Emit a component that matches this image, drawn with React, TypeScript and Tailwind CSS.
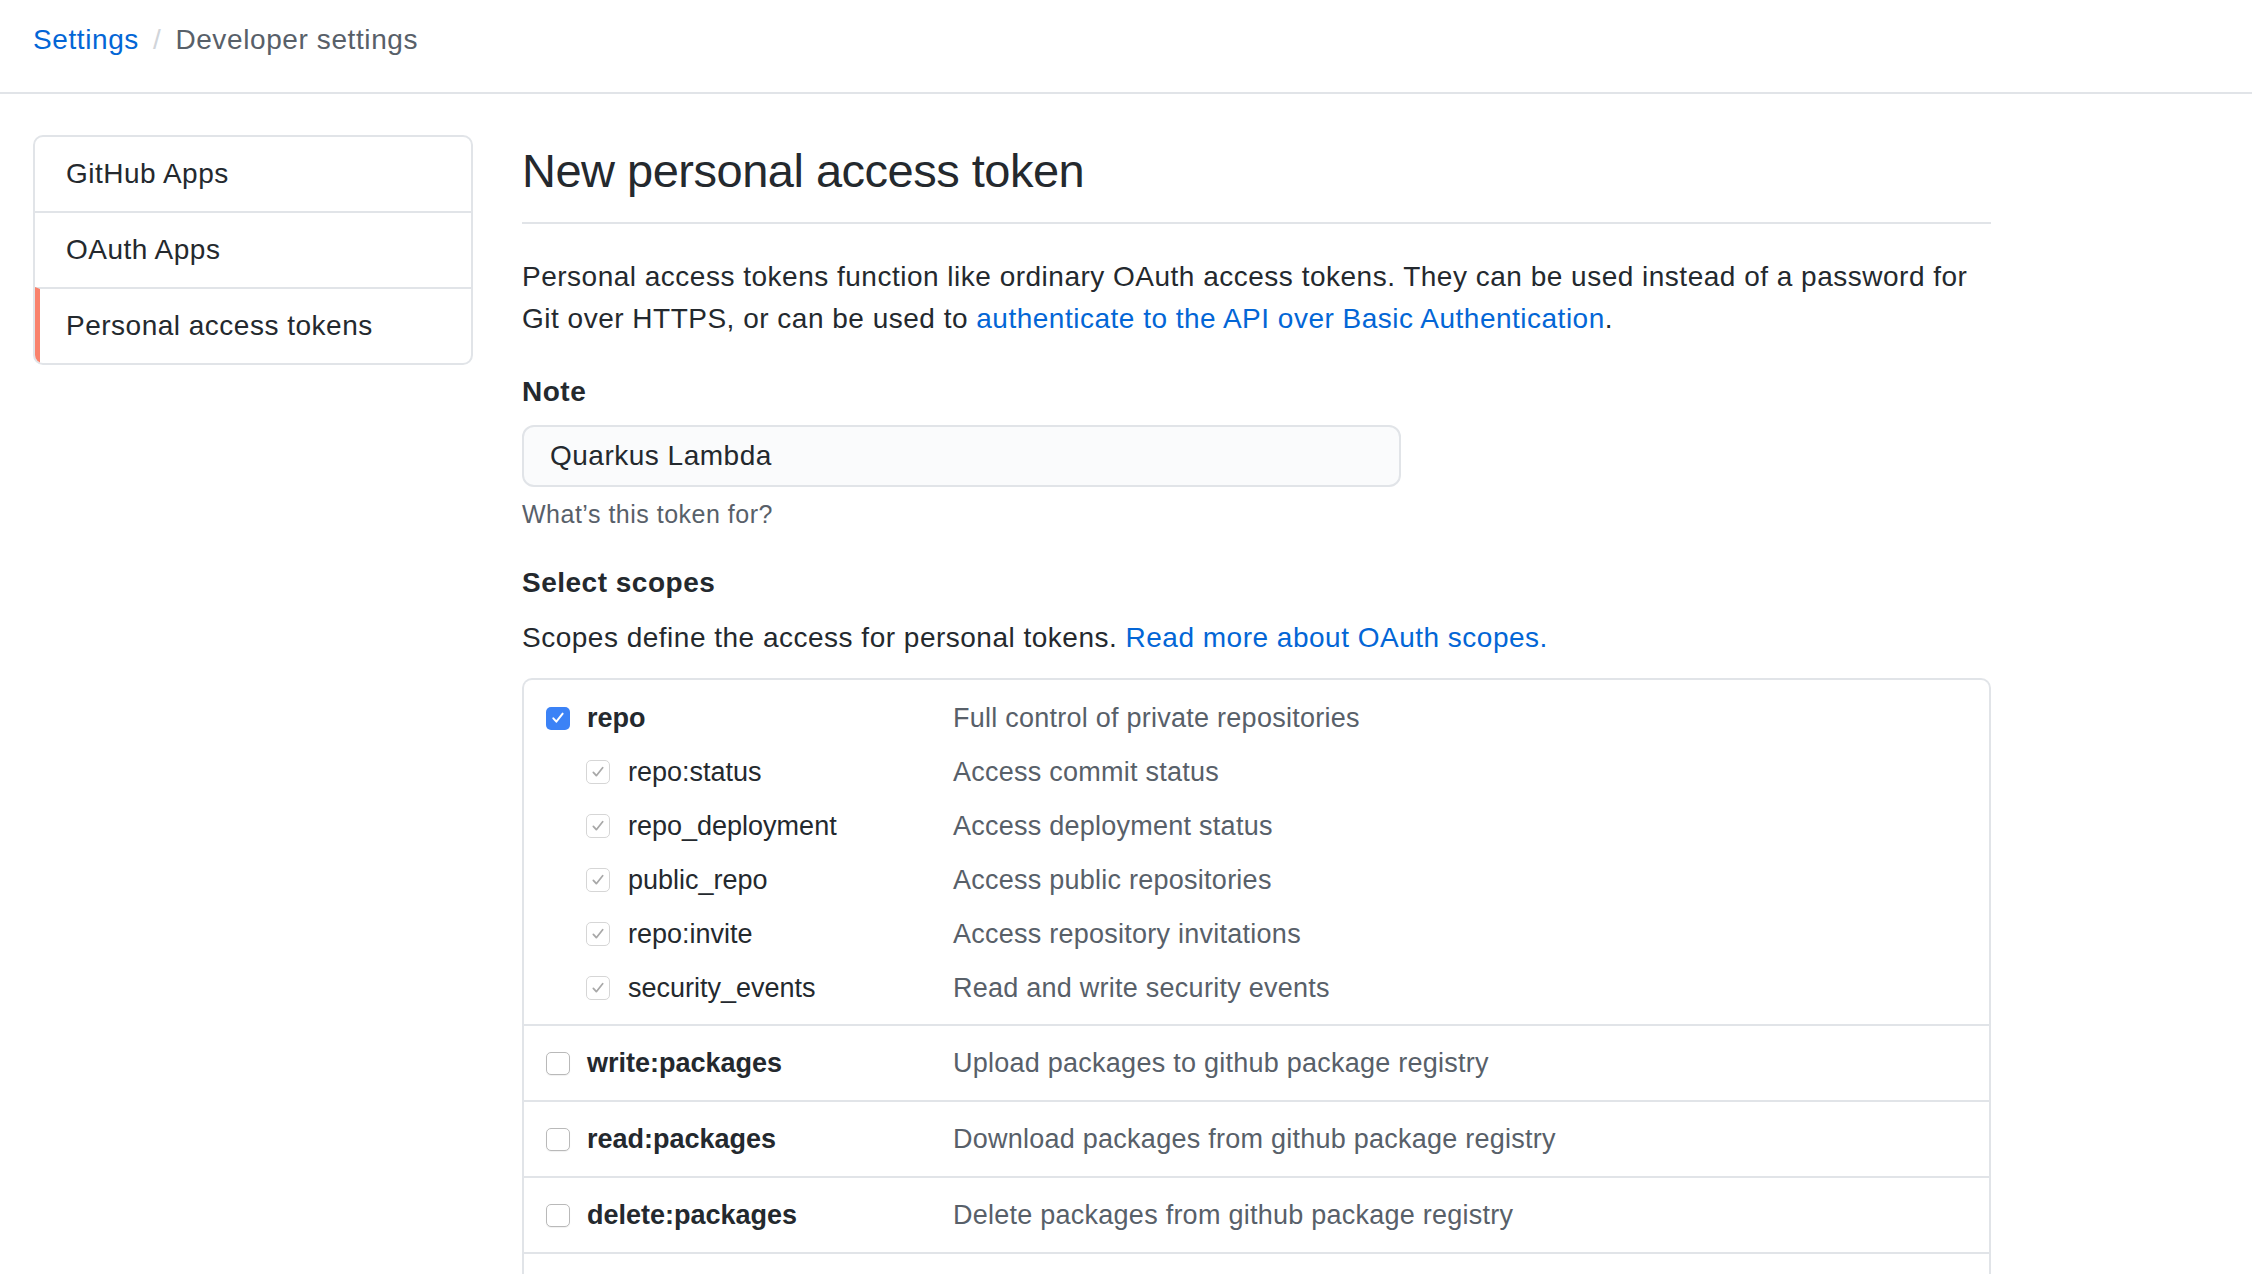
import React from 'react';

interface Scope {
  name: string;
  description: string;
}

interface ScopeGroup {
  scope: Scope;
  checked: boolean;
  children?: Scope[];
}

const scopeGroups: ScopeGroup[] = [
  {
    scope: { name: 'repo', description: 'Full control of private repositories' },
    checked: true,
    children: [
      { name: 'repo:status', description: 'Access commit status' },
      { name: 'repo_deployment', description: 'Access deployment status' },
      { name: 'public_repo', description: 'Access public repositories' },
      { name: 'repo:invite', description: 'Access repository invitations' },
      { name: 'security_events', description: 'Read and write security events' },
    ],
  },
  {
    scope: { name: 'write:packages', description: 'Upload packages to github package registry' },
    checked: false,
  },
  {
    scope: { name: 'read:packages', description: 'Download packages from github package registry' },
    checked: false,
  },
  {
    scope: { name: 'delete:packages', description: 'Delete packages from github package registry' },
    checked: false,
  },
  {
    scope: { name: 'admin:org', description: 'Full control of orgs and teams, read and write org projects' },
    checked: false,
  },
];

const navItems = ['GitHub Apps', 'OAuth Apps', 'Personal access tokens'];

function CheckMark({ color, weight }: { color: string; weight: number }) {
  return (
    <svg viewBox="0 0 24 24" className="w-[16px] h-[16px]" fill="none">
      <path d="M5 12.5l4.5 5L19 5.5" stroke={color} strokeWidth={weight} strokeLinecap="round" strokeLinejoin="round" />
    </svg>
  );
}

function Checkbox({ state }: { state: 'checked' | 'inherited' | 'empty' }) {
  if (state === 'checked') {
    return (
      <div className="w-[24px] h-[23px] rounded-[5px] bg-[#3b82f6] flex items-center justify-center shrink-0">
        <CheckMark color="#ffffff" weight={3} />
      </div>
    );
  }
  if (state === 'inherited') {
    return (
      <div className="w-[24px] h-[24px] rounded-[5px] bg-white border border-[#d6d6d6] flex items-center justify-center shrink-0">
        <CheckMark color="#a8a8a8" weight={2.6} />
      </div>
    );
  }
  return (
    <div className="w-[24px] h-[23px] rounded-[5px] bg-white border border-[#b9b9b9] shadow-[0_1px_1px_rgba(0,0,0,0.06)] shrink-0" />
  );
}

export default function App() {
  return (
    <div className="min-h-screen bg-white text-[#24292e] font-['Liberation_Sans',Arial,sans-serif] tracking-[0.5px]">
      {/* Breadcrumb header */}
      <div className="h-[94px] border-b-2 border-[#e1e4e8] pt-[19px] pl-[33px]">
        <div className="flex items-center text-[28px] leading-[42px] tracking-[0.6px]">
          <a className="text-[#0366d6]">Settings</a>
          <span className="text-[#d1d5da] mx-[14px]">/</span>
          <span className="text-[#586069]">Developer settings</span>
        </div>
      </div>

      <div className="flex pl-[33px] pt-[41px] gap-[49px]">
        {/* Sidebar */}
        <div className="w-[440px] shrink-0 self-start rounded-[10px] border-2 border-[#e1e4e8] overflow-hidden">
          {navItems.map((item, i) => (
            <div
              key={item}
              className={
                'flex items-center pl-[31px] text-[28px] ' +
                (i > 0 ? 'h-[76px] border-t-2 border-[#e1e4e8] ' : 'h-[74px] ') +
                (i === 2 ? 'border-l-[5px] border-l-[#f9826c] !pl-[26px]' : '')
              }
            >
              {item}
            </div>
          ))}
        </div>

        {/* Main column */}
        <div className="w-[1469px]">
          <h1 className="text-[47px] font-normal leading-[72px] tracking-[-0.5px] pb-[15px] border-b-2 border-[#e1e4e8]">
            New personal access token
          </h1>

          <p className="mt-[32px] text-[28px] leading-[42px]">
            Personal access tokens function like ordinary OAuth access tokens. They can be used instead of a password for
            Git over HTTPS, or can be used to{' '}
            <a className="text-[#0366d6]">authenticate to the API over Basic Authentication</a>.
          </p>

          <div className="mt-[31px] text-[28px] leading-[42px] font-bold">Note</div>
          <div className="mt-[12px] w-[879px] h-[62px] rounded-[12px] border-2 border-[#e1e4e8] bg-[#fafbfc] flex items-center pl-[26px] text-[28px]">
            Quarkus Lambda
          </div>
          <div className="mt-[9px] text-[25px] leading-[36px] text-[#586069]">What’s this token for?</div>

          <div className="mt-[30px] text-[28px] leading-[42px] font-bold">Select scopes</div>
          <p className="mt-[13px] text-[28px] leading-[42px]">
            Scopes define the access for personal tokens.{' '}
            <a className="text-[#0366d6]">Read more about OAuth scopes.</a>
          </p>

          {/* Scopes table */}
          <div className="mt-[19px] rounded-t-[10px] border-2 border-b-0 border-[#e1e4e8] tracking-normal text-[27px]">
            {scopeGroups.map((group, gi) => (
              <div
                key={group.scope.name}
                className={(gi > 0 ? 'border-t-2 border-[#e1e4e8] ' : '') + (group.children ? 'pt-[11px] pb-[9px]' : 'py-0')}
              >
                <div className={'flex items-center pl-[22px] ' + (group.children ? 'h-[54px]' : 'h-[74px]')}>
                  <div className="w-[407px] flex items-center gap-[17px]">
                    <Checkbox state={group.checked ? 'checked' : 'empty'} />
                    <span className="font-bold">{group.scope.name}</span>
                  </div>
                  <span className="text-[#586069] tracking-[0.25px]">{group.scope.description}</span>
                </div>
                {group.children?.map((child) => (
                  <div key={child.name} className="h-[54px] flex items-center pl-[62px]">
                    <div className="w-[367px] flex items-center gap-[18px]">
                      <Checkbox state="inherited" />
                      <span>{child.name}</span>
                    </div>
                    <span className="text-[#586069] tracking-[0.25px]">{child.description}</span>
                  </div>
                ))}
              </div>
            ))}
          </div>
        </div>
      </div>
    </div>
  );
}
